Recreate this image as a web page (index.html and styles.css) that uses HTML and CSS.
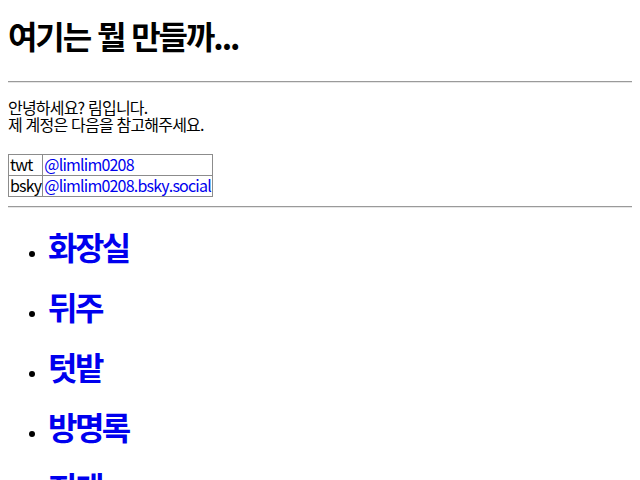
FILE: index.html
```html
<!DOCTYPE html>
<html lang="ko">
<head>
<meta charset="utf-8">
<title>여기는 뭘 만들까...</title>
<link rel="stylesheet" href="styles.css">
</head>
<body>
<h1 class="title">여기는 뭘 만들까...</h1>
<hr class="rule">
<p class="intro">안녕하세요? 림입니다.<br>제 계정은 다음을 참고해주세요.</p>
<table class="accounts">
<tr><td>twt</td><td><a href="#">@limlim0208</a></td></tr>
<tr><td>bsky</td><td><a href="#">@limlim0208.bsky.social</a></td></tr>
</table>
<hr class="rule rule-after-table">
<ul class="menu">
<li><h1 class="menu-item"><a href="#">화장실</a></h1></li>
<li><h1 class="menu-item"><a href="#">뒤주</a></h1></li>
<li><h1 class="menu-item"><a href="#">텃밭</a></h1></li>
<li><h1 class="menu-item"><a href="#">방명록</a></h1></li>
<li><h1 class="menu-item"><a href="#">지게</a></h1></li>
</ul>
</body>
</html>
```
FILE: styles.css
```css
html {
  margin: 0;
  padding: 0;
}
body {
  margin: 0;
  padding: 8px;
  font-family: "Noto Sans CJK KR", "Noto Sans", sans-serif;
  font-size: 16px;
  line-height: 17px;
  letter-spacing: -0.05em;
  color: #000;
  background: #fff;
}
a {
  color: #0000ee;
  text-decoration: none;
}
.title,
.menu-item {
  font-size: 32px;
  font-weight: bold;
  line-height: 38.4px;
}
.title {
  margin: 7.5px 0 27px;
  letter-spacing: -0.065em;
}
.menu-item {
  margin: 19px 0 21.6px;
  letter-spacing: -0.08em;
}
.rule {
  border: none;
  border-top: 1px solid #9a9a9a;
  border-bottom: 1px solid #e6e6e6;
  margin: 8px 0;
  height: 0;
}
.rule-after-table {
  margin-top: 9px;
}
.intro {
  margin: 16px 0 21px;
}
.accounts {
  border-collapse: collapse;
  margin: 0;
}
.accounts td {
  border: 1px solid #8c8c8c;
  padding: 0 1px;
  height: 20px;
  vertical-align: middle;
}
.menu {
  margin: 0;
  padding-left: 40px;
  list-style: disc;
}
```
